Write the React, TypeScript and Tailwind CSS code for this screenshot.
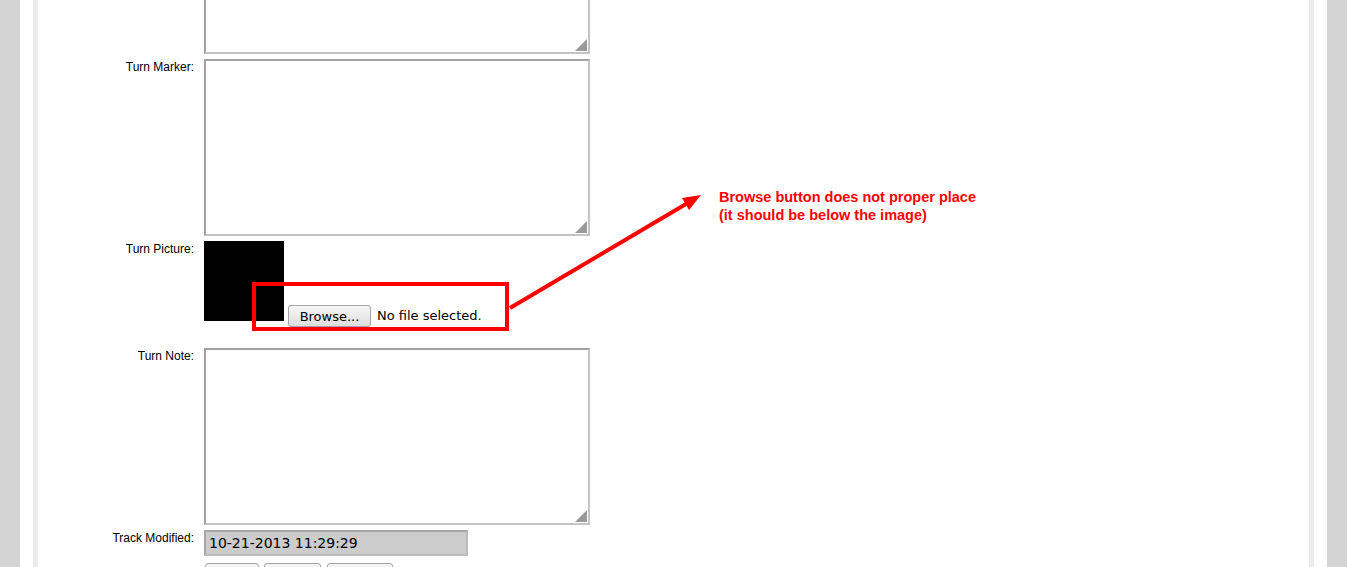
import type { ReactNode } from 'react'

const labelFont = { fontFamily: '"Liberation Sans", Arial, sans-serif' }
const uiFont = { fontFamily: '"DejaVu Sans", sans-serif' }

function Grip() {
  return (
    <svg className="absolute right-[1px] bottom-[1px]" width="12" height="12" viewBox="0 0 12 12">
      <polygon points="12,0 12,12 0,12" fill="#9a9a9a" />
    </svg>
  )
}

function TextBox() {
  return (
    <div className="relative w-[386px] h-[177px] bg-white border-2 border-t-[#a0a0a0] border-l-[#a0a0a0] border-r-[#c4c4c4] border-b-[#c4c4c4]">
      <Grip />
    </div>
  )
}

function Row({ label, children, className = '' }: { label?: string; children: ReactNode; className?: string }) {
  return (
    <div className={`flex ${className}`}>
      <div className="w-[166px] shrink-0 pr-[10px] pt-[2px] text-right text-[12px] leading-[13px] text-black" style={labelFont}>
        {label}
      </div>
      <div>{children}</div>
    </div>
  )
}

export default function App() {
  return (
    <div className="relative flex h-[567px] w-[1347px] overflow-hidden bg-white">
      <div className="w-[20px] shrink-0 bg-[#d4d4d4]" />
      <div className="w-[13px] shrink-0 bg-white" />
      <div className="w-[5px] shrink-0 bg-[#ebebeb]" />

      <div className="flex-1 bg-white">
        <div className="mt-[-123px] flex flex-col">
          <Row>
            <TextBox />
          </Row>
          <Row label="Turn Marker:" className="mt-[5px]">
            <TextBox />
          </Row>
          <Row label="Turn Picture:" className="mt-[5px]">
            <div className="flex items-start">
              <div className="h-[80px] w-[80px] bg-black" />
              <button
                className="ml-[4px] mt-[64px] h-[22px] w-[83px] rounded-[3px] border border-[#a4a4a4] bg-gradient-to-b from-[#f7f7f7] to-[#dedede] text-[13px] leading-none text-black"
                style={uiFont}
              >
                Browse...
              </button>
              <span className="ml-[6px] mt-[67px] text-[13px] leading-[16px] text-black" style={uiFont}>
                No file selected.
              </span>
            </div>
          </Row>
          <Row label="Turn Note:" className="mt-[21px]">
            <TextBox />
          </Row>
          <Row label="Track Modified:" className="mt-[5px]">
            <div
              className="flex h-[26px] w-[264px] items-center border-2 border-t-[#a8a8a8] border-l-[#a8a8a8] border-r-[#bcbcbc] border-b-[#bcbcbc] bg-[#cccccc] pl-[3px] text-[14px] text-black"
              style={uiFont}
            >
              10-21-2013 11:29:29
            </div>
          </Row>
          <Row className="mt-[7px]">
            <div className="flex">
              <div className="ml-[1px] h-[24px] w-[54px] rounded-[3px] border border-[#a4a4a4] bg-[#f4f4f4]" />
              <div className="ml-[5px] h-[24px] w-[57px] rounded-[3px] border border-[#a4a4a4] bg-[#f4f4f4]" />
              <div className="ml-[6px] h-[24px] w-[66px] rounded-[3px] border border-[#a4a4a4] bg-[#f4f4f4]" />
            </div>
          </Row>
        </div>
      </div>

      <div className="w-[5px] shrink-0 bg-[#ebebeb]" />
      <div className="w-[13px] shrink-0 bg-white" />
      <div className="w-[20px] shrink-0 bg-[#d4d4d4]" />

      {/* annotation overlay */}
      <div className="absolute left-[252px] top-[282px] h-[49px] w-[257px] border-[4px] border-[#ff0000]" />
      <svg className="absolute left-0 top-0" width="1347" height="567">
        <line x1="510" y1="308" x2="686" y2="204" stroke="#ff0000" strokeWidth="4" />
        <polygon points="701,195 689,210 682,198" fill="#ff0000" />
      </svg>
      <div
        className="absolute left-[719px] top-[188px] text-[14.5px] font-bold leading-[18px] text-[#ff0000]"
        style={labelFont}
      >
        <div>Browse button does not proper place</div>
        <div>(it should be below the image)</div>
      </div>
    </div>
  )
}
